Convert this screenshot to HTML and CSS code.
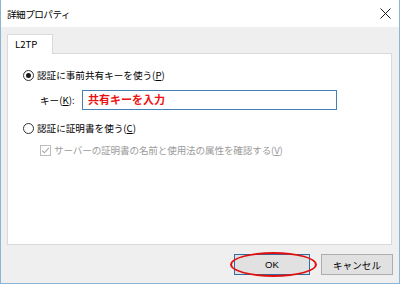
FILE: index.html
```html
<!DOCTYPE html>
<html lang="ja">

<head>
  <meta charset="UTF-8">
  <meta name="viewport" content="width=device-width, initial-scale=1.0">
  <title>詳細プロパティ</title>
  <link rel="stylesheet" href="styles.css">
</head>

<body>
  <div class="window">
    <header class="title-bar">
      <span class="title">詳細プロパティ</span>
      <svg class="close" width="11" height="11" viewBox="0 0 11 11">
        <path d="M0.5 0.5 L10.5 10.5 M10.5 0.5 L0.5 10.5" stroke="#1a1a1a" stroke-width="1" fill="none"/>
      </svg>
    </header>

    <main class="body">
      <div class="tabs">
        <span class="tab">L2TP</span>
      </div>

      <section class="panel">
        <div class="row">
          <span class="radio checked"></span>
          <span>認証に事前共有キーを使う(<u>P</u>)</span>
        </div>

        <div class="row key-row">
          <span class="key-label">キー(<u>K</u>):</span>
          <div class="text-box">共有キーを入力</div>
        </div>

        <div class="row cert-row">
          <span class="radio"></span>
          <span>認証に証明書を使う(<u>C</u>)</span>
        </div>

        <div class="row sub-row disabled">
          <svg class="check" width="11" height="11" viewBox="0 0 11 11">
            <rect x="0.5" y="0.5" width="10" height="10" fill="#fff" stroke="#bcbcbc"/>
            <path d="M2.2 5.6 L4.4 7.8 L8.8 2.8" stroke="#a8a8a8" stroke-width="1.1" fill="none"/>
          </svg>
          <span class="sub-text">サーバーの証明書の名前と使用法の属性を確認する(<u>V</u>)</span>
        </div>
      </section>

      <footer class="buttons">
        <div class="ok-wrap">
          <button class="btn default">OK</button>
          <span class="mark"></span>
        </div>
        <button class="btn">キャンセル</button>
      </footer>
    </main>
  </div>
</body>

</html>
```

FILE: styles.css
```css
/* ---- General ---- */

:root {
  --border: #d9d9d9;
  --frame: #8cb4d3;
}

body {
  margin: 0;
  font-family: "Noto Sans CJK JP", "Noto Sans", sans-serif;
  font-size: 9.6px;
  color: #000;
}

u {
  text-decoration-thickness: 1px;
  text-underline-offset: 1px;
}

.window {
  box-sizing: border-box;
  width: 400px;
  height: 284px;
  border: 1px solid var(--frame);
  border-top: none;
  background: #efefef;
  display: flex;
  flex-direction: column;
}

/* ---- Title bar ---- */

.title-bar {
  height: 27px;
  background: #fff;
  display: flex;
  align-items: center;
  justify-content: space-between;
  padding: 0 7px 0 6px;
}

.title {
  letter-spacing: -0.5px;
}

.close {
  margin-right: 1px;
}

/* ---- Tabs + panel ---- */

.body {
  flex: 1;
  padding: 7px 6px 0 6px;
  display: flex;
  flex-direction: column;
}

.tabs {
  display: flex;
}

.tab {
  box-sizing: border-box;
  width: 46px;
  height: 20px;
  margin-bottom: -1px;
  padding: 2px 0 0 7px;
  background: #fff;
  border: 1px solid var(--border);
  border-bottom: none;
  position: relative;
  z-index: 1;
}

.panel {
  box-sizing: border-box;
  width: 385px;
  height: 192px;
  background: #fff;
  border: 1px solid var(--border);
  padding: 13px 0 0 15px;
}

.row {
  display: flex;
  align-items: center;
  height: 16px;
  gap: 3px;
}

.radio {
  box-sizing: border-box;
  width: 11px;
  height: 11px;
  border: 1px solid #333;
  border-radius: 50%;
  display: flex;
  align-items: center;
  justify-content: center;
}

.radio.checked::after {
  content: "";
  width: 5px;
  height: 5px;
  border-radius: 50%;
  background: #1a1a1a;
}

.key-row {
  height: 20px;
  margin-top: 7px;
  padding-left: 17px;
  gap: 0;
}

.key-label {
  width: 42px;
}

.text-box {
  box-sizing: border-box;
  width: 255px;
  height: 20px;
  border: 1px solid #4581b4;
  padding-left: 5px;
  color: #ee1111;
  font-weight: bold;
  font-size: 11px;
  line-height: 17px;
}

.cert-row {
  margin-top: 10px;
}

.sub-row {
  margin-top: 6px;
  padding-left: 17px;
}

.sub-text {
  letter-spacing: -0.15px;
}

.disabled {
  color: #9b9b9b;
}

/* ---- Buttons ---- */

.buttons {
  display: flex;
  justify-content: flex-end;
  gap: 11px;
  padding: 9px 0 0 0;
}

.ok-wrap {
  position: relative;
}

.btn {
  box-sizing: border-box;
  width: 76px;
  height: 21px;
  margin: 0;
  padding: 0;
  font-family: "Liberation Sans", "Noto Sans CJK JP", sans-serif;
  font-size: 9.6px;
  font-weight: normal;
  background: #e1e1e1;
  border: 1px solid #adadad;
  color: #000;
}

.btn:last-child {
  width: 72px;
}

.btn.default {
  border-color: #2f6ea3;
  box-shadow: inset 0 0 0 1px #e1e1e1;
}

.mark {
  position: absolute;
  left: -4px;
  top: -2px;
  width: 87px;
  height: 25px;
  box-sizing: border-box;
  border: 2px solid #e01010;
  border-radius: 50%;
}
```
